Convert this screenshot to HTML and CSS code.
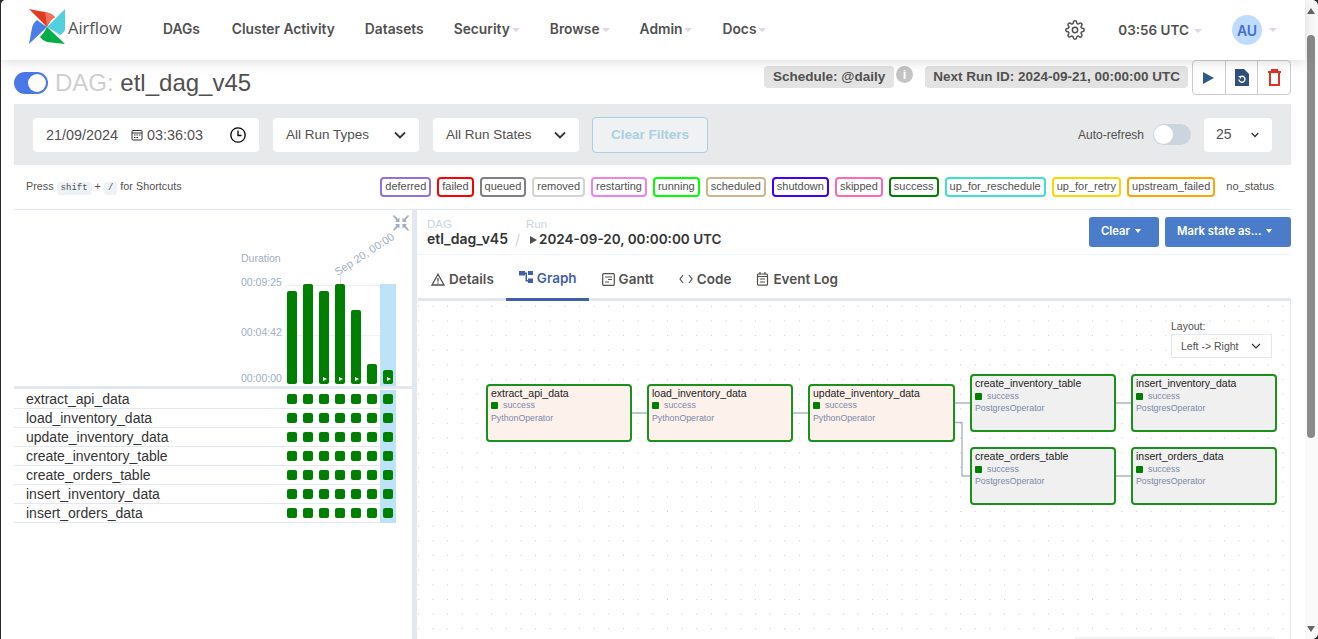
FILE: index.html
```html
<!DOCTYPE html>
<html lang="en">
<head>
  <meta charset="UTF-8">
  <title>Airflow - etl_dag_v45</title>
  <link rel="stylesheet" href="styles.css">
</head>
<body>
<div class="window">
  <div class="viewport">
    <nav class="navbar">
      <a class="brand">
        <svg class="logo" width="38" height="38" viewBox="28 8 38 38">
          <path fill="#e43921" d="M47 27L29 9Q38 11 45 12Q51 13 55 17Q50 20 47 27Z"/>
          <path fill="#f4725b" d="M47 27Q46 18 45 12Q51 13 55 17Q50 20 47 27Z"/>
          <path fill="#4fd0dc" d="M47 27L65 9V30Q63 34 60 35Q53 30 47 27Z"/>
          <path fill="#00ad46" d="M47 27L65 44L47 42Q43 41 40 37Q45 32 47 27Z"/>
          <path fill="#4a7fe8" d="M47 27L29 44L32 28Q33 23 37 20Q42 24 47 27Z"/>
          <path fill="#6fa4f0" d="M47 27L37 20Q42 24 47 27Z"/>
        </svg>
        <span class="brand-name">Airflow</span>
      </a>
      <ul class="nav-links">
        <li>DAGs</li>
        <li>Cluster Activity</li>
        <li>Datasets</li>
        <li class="drop">Security</li>
        <li class="drop">Browse</li>
        <li class="drop">Admin</li>
        <li class="drop">Docs</li>
      </ul>
      <div class="nav-right">
        <svg class="gear" width="20" height="20" viewBox="0 0 24 24" fill="none" stroke="#51504f" stroke-width="1.8" stroke-linejoin="round">
          <circle cx="12" cy="12" r="3.2"/>
          <path d="M19.4 15a1.7 1.7 0 0 0 .3 1.8l.1.1a2 2 0 1 1-2.9 2.9l-.1-.1a1.7 1.7 0 0 0-2.8 1.2v.1a2 2 0 1 1-4 0V21a1.7 1.7 0 0 0-2.9-1.2l-.1.1a2 2 0 1 1-2.8-2.9l.1-.1a1.7 1.7 0 0 0-1.2-2.8H3a2 2 0 1 1 0-4h.1a1.7 1.7 0 0 0 1.2-2.9l-.1-.1a2 2 0 1 1 2.9-2.8l.1.1a1.7 1.7 0 0 0 1.8.3H9a1.7 1.7 0 0 0 1-1.5V3a2 2 0 1 1 4 0v.1a1.7 1.7 0 0 0 2.9 1.2l.1-.1a2 2 0 1 1 2.8 2.9l-.1.1a1.7 1.7 0 0 0-.3 1.8V9a1.7 1.7 0 0 0 1.5 1H21a2 2 0 1 1 0 4h-.1a1.7 1.7 0 0 0-1.5 1z"/>
        </svg>
        <span class="clock drop">03:56 UTC</span>
        <span class="avatar">AU</span>
        <span class="caret"></span>
      </div>
    </nav>

    <div class="content">
      <header class="dag-head">
        <div class="dag-title">
          <span class="switch-on"></span>
          <h1><span class="muted">DAG:</span> etl_dag_v45</h1>
        </div>
        <div class="dag-meta">
          <span class="pill">Schedule: @daily</span>
          <span class="info">i</span>
          <span class="pill next-run">Next Run ID: 2024-09-21, 00:00:00 UTC</span>
          <div class="actions">
            <button class="action">
              <svg width="11" height="12" viewBox="0 0 11 12"><path fill="#2f5a8a" d="M0 0L11 6L0 12Z"/></svg>
            </button>
            <button class="action">
              <svg width="14" height="17" viewBox="0 0 14 17">
                <path fill="#2f4f7f" d="M0 0H9L14 5V17H0Z"/>
                <path fill="none" stroke="#fff" stroke-width="1.4" d="M4 10.5A3 3 0 1 0 5 8"/>
                <path fill="#fff" d="M3 7H6V10Z"/>
              </svg>
            </button>
            <button class="action">
              <svg width="13" height="17" viewBox="0 0 13 17" fill="none" stroke="#e03127" stroke-width="2">
                <path d="M0 3H13M4 3V1H9V3M2 4V16H11V4"/>
              </svg>
            </button>
          </div>
        </div>
      </header>

      <section class="filters">
        <div class="field date-field">
          <span>21/09/2024</span>
          <svg class="cal" width="12" height="12" viewBox="0 0 12 12" fill="none" stroke="#333" stroke-width="1">
            <rect x="1" y="1.5" width="10" height="9.5" rx="1"/>
            <path d="M1 4H11M3 6H4.5M5.5 6H7M8 6H9.5M3 8.5H4.5M5.5 8.5H7"/>
          </svg>
          <span>03:36:03</span>
          <svg class="clock-icon" width="16" height="16" viewBox="0 0 16 16" fill="none" stroke="#000" stroke-width="1.3">
            <circle cx="8" cy="8" r="7.2"/>
            <path d="M8 3.5V8.5H11.5"/>
          </svg>
        </div>
        <div class="field select-field run-select">
          <span>All Run Types</span>
          <svg class="chev" width="12" height="8" viewBox="0 0 12 8"><path d="M1 1.5L6 6.5L11 1.5" fill="none" stroke="#333" stroke-width="1.8"/></svg>
        </div>
        <div class="field select-field run-select">
          <span>All Run States</span>
          <svg class="chev" width="12" height="8" viewBox="0 0 12 8"><path d="M1 1.5L6 6.5L11 1.5" fill="none" stroke="#333" stroke-width="1.8"/></svg>
        </div>
        <button class="clear-filters">Clear Filters</button>
        <div class="refresh">
          <span class="refresh-label">Auto-refresh</span>
          <span class="switch-off"></span>
          <div class="field select-field count-select">
            <span>25</span>
            <svg width="8" height="6" viewBox="0 0 8 6"><path d="M.7 1L4 4.5L7.3 1" fill="none" stroke="#333" stroke-width="1.3"/></svg>
          </div>
        </div>
      </section>

      <section class="legend-row">
        <p class="shortcuts">Press <kbd>shift</kbd> + <kbd class="slash">/</kbd> for Shortcuts</p>
        <ul class="legend">
          <li class="st-deferred">deferred</li>
          <li class="st-failed">failed</li>
          <li class="st-queued">queued</li>
          <li class="st-removed">removed</li>
          <li class="st-restarting">restarting</li>
          <li class="st-running">running</li>
          <li class="st-scheduled">scheduled</li>
          <li class="st-shutdown">shutdown</li>
          <li class="st-skipped">skipped</li>
          <li class="st-success">success</li>
          <li class="st-reschedule">up_for_reschedule</li>
          <li class="st-retry">up_for_retry</li>
          <li class="st-upstream">upstream_failed</li>
          <li class="st-none">no_status</li>
        </ul>
      </section>

      <div class="split">
        <aside class="grid-panel">
          <div class="chart">
            <svg class="collapse" width="16" height="16" viewBox="0 0 16 16" fill="#a0aec0">
              <path d="M0 1L1 0L5 4L6.5 2.5V7H2L3.5 5.5Z"/>
              <path d="M16 1L15 0L11 4L9.5 2.5V7H14L12.5 5.5Z"/>
              <path d="M0 15L1 16L5 12L6.5 13.5V9H2L3.5 10.5Z"/>
              <path d="M16 15L15 16L11 12L9.5 13.5V9H14L12.5 10.5Z"/>
            </svg>
            <span class="duration-title">Duration</span>
            <span class="run-date">Sep 20, 00:00</span>
            <span class="run-tick"></span>
            <div class="y-axis">
              <span>00:09:25</span>
              <span>00:04:42</span>
              <span>00:00:00</span>
            </div>
            <div class="plot">
              <i class="gridline line-top"></i>
              <i class="gridline line-mid"></i>
              <i class="gridline line-low"></i>
              <div class="bar-col"><div class="bar h93"></div></div>
              <div class="bar-col"><div class="bar h100"></div></div>
              <div class="bar-col"><div class="bar h93 manual"></div></div>
              <div class="bar-col"><div class="bar h100 manual"></div></div>
              <div class="bar-col"><div class="bar h74 manual"></div></div>
              <div class="bar-col"><div class="bar h20"></div></div>
              <div class="bar-col selected"><div class="bar h14 manual"></div></div>
            </div>
          </div>
          <div class="thick-rule"></div>
          <div class="task-rows">
            <div class="task-row"><span class="task-name">extract_api_data</span><span class="cell"><b></b></span><span class="cell"><b></b></span><span class="cell"><b></b></span><span class="cell"><b></b></span><span class="cell"><b></b></span><span class="cell"><b></b></span><span class="cell selected"><b></b></span></div>
            <div class="task-row"><span class="task-name">load_inventory_data</span><span class="cell"><b></b></span><span class="cell"><b></b></span><span class="cell"><b></b></span><span class="cell"><b></b></span><span class="cell"><b></b></span><span class="cell"><b></b></span><span class="cell selected"><b></b></span></div>
            <div class="task-row"><span class="task-name">update_inventory_data</span><span class="cell"><b></b></span><span class="cell"><b></b></span><span class="cell"><b></b></span><span class="cell"><b></b></span><span class="cell"><b></b></span><span class="cell"><b></b></span><span class="cell selected"><b></b></span></div>
            <div class="task-row"><span class="task-name">create_inventory_table</span><span class="cell"><b></b></span><span class="cell"><b></b></span><span class="cell"><b></b></span><span class="cell"><b></b></span><span class="cell"><b></b></span><span class="cell"><b></b></span><span class="cell selected"><b></b></span></div>
            <div class="task-row"><span class="task-name">create_orders_table</span><span class="cell"><b></b></span><span class="cell"><b></b></span><span class="cell"><b></b></span><span class="cell"><b></b></span><span class="cell"><b></b></span><span class="cell"><b></b></span><span class="cell selected"><b></b></span></div>
            <div class="task-row"><span class="task-name">insert_inventory_data</span><span class="cell"><b></b></span><span class="cell"><b></b></span><span class="cell"><b></b></span><span class="cell"><b></b></span><span class="cell"><b></b></span><span class="cell"><b></b></span><span class="cell selected"><b></b></span></div>
            <div class="task-row"><span class="task-name">insert_orders_data</span><span class="cell"><b></b></span><span class="cell"><b></b></span><span class="cell"><b></b></span><span class="cell"><b></b></span><span class="cell"><b></b></span><span class="cell"><b></b></span><span class="cell selected"><b></b></span></div>
          </div>
        </aside>

        <main class="detail-panel">
          <div class="crumb-bar">
            <div class="crumbs">
              <div class="crumb crumb-dag">
                <small>DAG</small>
                <strong>etl_dag_v45</strong>
              </div>
              <span class="crumb-sep">/</span>
              <div class="crumb crumb-run">
                <small class="run-label">Run</small>
                <strong><span class="run-arrow"></span>2024-09-20, 00:00:00 UTC</strong>
              </div>
            </div>
            <div class="crumb-actions">
              <button class="btn-blue btn-clear">Clear<span class="btn-caret"></span></button>
              <button class="btn-blue btn-mark">Mark state as...<span class="btn-caret"></span></button>
            </div>
          </div>

          <div class="tabs">
            <a class="tab">
              <svg width="14" height="13" viewBox="0 0 14 13" fill="none" stroke="#51504f" stroke-width="1.3"><path d="M7 1.2L13 12H1Z"/><path d="M7 5V8.6M7 9.6V10.8"/></svg>
              Details
            </a>
            <a class="tab active">
              <svg width="14" height="13" viewBox="0 0 14 13" fill="#3f5fa8"><rect x="0" y="0" width="6" height="4.500"/><rect x="9" y="0" width="5" height="4"/><rect x="9" y="7.500" width="5" height="4.500"/><path d="M6 1.500H8V9H9V10.500H6.500V3H6Z"/></svg>
              Graph
            </a>
            <a class="tab">
              <svg width="13" height="13" viewBox="0 0 13 13" fill="none" stroke="#51504f" stroke-width="1.2"><rect x=".7" y=".7" width="11.6" height="11.6" rx="1"/><path d="M3 4H10M6 6.5H10M3 9H7"/></svg>
              Gantt
            </a>
            <a class="tab">
              <svg width="14" height="10" viewBox="0 0 14 10" fill="none" stroke="#51504f" stroke-width="1.2"><path d="M4 1L1 5L4 9M10 1L13 5L10 9"/></svg>
              Code
            </a>
            <a class="tab">
              <svg width="13" height="14" viewBox="0 0 13 14" fill="none" stroke="#51504f" stroke-width="1.2"><rect x="1.5" y="2" width="10" height="11.2" rx="1"/><path d="M1.5 4.5H11.5M4 0V2.5M9 0V2.5M4 7H9M4 10H9"/></svg>
              Event Log
            </a>
          </div>

          <div class="graph">
            <svg class="edges" width="872" height="338" viewBox="418 301 872 338" fill="none" stroke="#a9b5c6" stroke-width="1.4">
              <path d="M632 413H647M793 413H808M955 403H970M955 422.500H962V476H970M1116 403H1131M1116 476H1131"/>
            </svg>

            <div class="layout-picker">
              <label>Layout:</label>
              <div class="layout-select">
                <span>Left -&gt; Right</span>
                <svg width="10" height="6" viewBox="0 0 10 6"><path d="M1 1L5 5L9 1" fill="none" stroke="#333" stroke-width="1.2"/></svg>
              </div>
            </div>

            <div class="node py node-a">
              <div class="node-name">extract_api_data</div>
              <div class="node-state"><b></b>success</div>
              <div class="node-op">PythonOperator</div>
            </div>
            <div class="node py node-b">
              <div class="node-name">load_inventory_data</div>
              <div class="node-state"><b></b>success</div>
              <div class="node-op">PythonOperator</div>
            </div>
            <div class="node py node-c">
              <div class="node-name">update_inventory_data</div>
              <div class="node-state"><b></b>success</div>
              <div class="node-op">PythonOperator</div>
            </div>
            <div class="node pg node-d">
              <div class="node-name">create_inventory_table</div>
              <div class="node-state"><b></b>success</div>
              <div class="node-op">PostgresOperator</div>
            </div>
            <div class="node pg node-e">
              <div class="node-name">insert_inventory_data</div>
              <div class="node-state"><b></b>success</div>
              <div class="node-op">PostgresOperator</div>
            </div>
            <div class="node pg node-f">
              <div class="node-name">create_orders_table</div>
              <div class="node-state"><b></b>success</div>
              <div class="node-op">PostgresOperator</div>
            </div>
            <div class="node pg node-g">
              <div class="node-name">insert_orders_data</div>
              <div class="node-state"><b></b>success</div>
              <div class="node-op">PostgresOperator</div>
            </div>
            <div class="graph-foot"></div>
          </div>
        </main>
      </div>
    </div>
  </div>

  <div class="scrollbar">
    <span class="scroll-up"></span>
    <span class="scroll-thumb"></span>
    <span class="scroll-down"></span>
  </div>
</div>
</body>
</html>
```

FILE: styles.css
```css
* {
  box-sizing: border-box;
}

html {
  background-color: #2b2b2b;
}

body {
  margin: 0;
  height: 639px;
  overflow: hidden;
  font-family: "Liberation Sans", Arial, sans-serif;
  color: #51504f;
}

button {
  font-family: inherit;
}

.window {
  display: flex;
  height: 639px;
  margin-left: 1px;
  background-color: #fff;
  border-radius: 5px 6px 6px 0;
  overflow: hidden;
}

.viewport {
  flex: 1;
  min-width: 0;
}

/* navbar */
.navbar {
  display: flex;
  align-items: center;
  height: 60px;
  padding-left: 27px;
  background-color: #fff;
  box-shadow: 0 2px 12px rgba(0, 0, 0, 0.14);
  position: relative;
  z-index: 2;
}

.brand {
  display: flex;
  align-items: flex-start;
  width: 135px;
  height: 38px;
  margin-top: -7px;
}

.brand-name {
  margin: 8px 0 0 2px;
  font-family: "Open Sans", sans-serif;
  font-size: 16.500px;
  color: #51504f;
}

.nav-links {
  display: flex;
  gap: 30px;
  margin: 0 0 2px;
  padding: 0;
  list-style: none;
  font-family: Inter, sans-serif;
  font-size: 13.800px;
  font-weight: 600;
}

.nav-links li:first-child {
  margin-right: 2px;
}

.drop::after {
  content: "";
  display: inline-block;
  margin-left: 2px;
  vertical-align: 2px;
  border-top: 4px solid #e3d5e6;
  border-left: 4px solid transparent;
  border-right: 4px solid transparent;
}

.nav-right {
  display: flex;
  align-items: center;
  margin-left: auto;
  margin-right: 28px;
  font-family: Inter, sans-serif;
  font-size: 13.500px;
  font-weight: 600;
}

.gear {
  margin-right: 33px;
}

.clock::after {
  margin-left: 5px;
}

.avatar {
  display: flex;
  align-items: center;
  justify-content: center;
  width: 30px;
  height: 30px;
  margin-left: 30px;
  border-radius: 50%;
  background-color: #bfdbfe;
  color: #3f6fdc;
  font-size: 14px;
}

.caret {
  margin-left: 7px;
  border-top: 4px solid #e3d5e6;
  border-left: 4px solid transparent;
  border-right: 4px solid transparent;
}

/* dag header */
.content {
  padding: 0 14px 0 13px;
}

.dag-head {
  display: flex;
  justify-content: space-between;
  height: 44px;
}

.dag-title {
  display: flex;
  align-items: center;
  gap: 7px;
  padding-top: 1px;
}

.dag-title h1 {
  margin: 0;
  font-size: 24px;
  font-weight: 400;
  color: #51504f;
}

.muted {
  color: #cfcfcf;
}

.switch-on {
  position: relative;
  width: 34px;
  height: 22px;
  border-radius: 11px;
  background-color: #4a78e8;
}

.switch-on::after {
  content: "";
  position: absolute;
  right: 2px;
  top: 2px;
  width: 18px;
  height: 18px;
  border-radius: 50%;
  background-color: #fff;
}

.dag-meta {
  display: flex;
  align-items: flex-start;
}

.pill {
  margin-top: 6px;
  height: 22px;
  line-height: 22px;
  padding: 0 9px;
  border-radius: 4px;
  background-color: #e3e3e3;
  font-size: 13.500px;
  font-weight: 700;
}

.info {
  width: 17px;
  height: 17px;
  margin: 6px 12px 0 2px;
  border-radius: 50%;
  background-color: #c4c4c4;
  color: #fff;
  text-align: center;
  font-size: 13px;
  font-weight: 700;
  line-height: 17px;
}

.next-run {
  margin-right: 4px;
  padding: 0 8px;
}

.actions {
  display: flex;
  width: 99px;
  height: 35px;
  border: 1px solid #ccc;
  border-radius: 4px;
  background-color: #fff;
}

.action {
  display: flex;
  flex: 1;
  align-items: center;
  justify-content: center;
  padding: 0;
  border: 0;
  border-right: 1px solid #ccc;
  background: none;
}

.action:last-child {
  border-right: 0;
}

/* filter bar */
.filters {
  display: flex;
  align-items: center;
  height: 61px;
  padding: 0 19px;
  background-color: #e8e9ea;
}

.field {
  display: flex;
  align-items: center;
  height: 34px;
  background-color: #fff;
  border-radius: 4px;
  font-size: 14px;
  color: #51504f;
}

.date-field {
  width: 226px;
  padding: 0 13px;
  margin-right: 14px;
  font-size: 14.400px;
}

.cal {
  margin: 0 4px 0 13px;
}

.clock-icon {
  margin-left: auto;
}

.select-field {
  justify-content: space-between;
  padding: 0 13px;
  font-size: 13.500px;
}

.select-field span {
  margin-bottom: 1px;
}

.run-select {
  width: 146px;
  margin-right: 14px;
}

.clear-filters {
  width: 116px;
  height: 36px;
  margin-left: -1px;
  padding-bottom: 2px;
  border: 1px solid #a8d0e0;
  border-radius: 4px;
  background-color: #f0f1f2;
  color: #a8d0e0;
  font-size: 13.500px;
  font-weight: 700;
}

.refresh {
  display: flex;
  align-items: center;
  margin-left: auto;
}

.refresh-label {
  font-size: 12px;
}

.switch-off {
  position: relative;
  width: 38px;
  height: 21px;
  margin: 0 13px 0 9px;
  border-radius: 11px;
  background-color: #cbd5e0;
}

.switch-off::after {
  content: "";
  position: absolute;
  left: 1px;
  top: 1px;
  width: 19px;
  height: 19px;
  border-radius: 50%;
  background-color: #fff;
}

.count-select {
  width: 68px;
  padding: 0 13px 0 12px;
  font-size: 14px;
}

/* legend */
.legend-row {
  display: flex;
  align-items: center;
  justify-content: space-between;
  height: 45px;
  padding: 0 12px;
  border-bottom: 1px solid #e2e8f0;
  font-size: 11px;
}

.shortcuts {
  margin: 0;
  font-size: 10.800px;
}

.shortcuts kbd {
  display: inline-block;
  padding: 0 4px;
  background-color: #edf2f7;
  border-radius: 3px;
  font-family: "Liberation Mono", monospace;
  font-size: 9px;
  line-height: 13px;
}

.legend {
  display: flex;
  gap: 6px;
  margin: 0;
  padding: 0;
  list-style: none;
}

.legend li {
  height: 20px;
  padding: 0 3px;
  border: 2px solid transparent;
  border-radius: 4px;
  line-height: 15px;
}

.st-deferred { border-color: #9370db !important; }
.st-failed { border-color: #ff0000 !important; }
.st-queued { border-color: #808080 !important; }
.st-removed { border-color: #d3d3d3 !important; }
.st-restarting { border-color: #ee82ee !important; }
.st-running { border-color: #00ff00 !important; }
.st-scheduled { border-color: #d2b48c !important; }
.st-shutdown { border-color: #3f00ff !important; }
.st-skipped { border-color: #ff69b4 !important; }
.st-success { border-color: #008000 !important; }
.st-reschedule { border-color: #40e0d0 !important; }
.st-retry { border-color: #ffd700 !important; }
.st-upstream { border-color: #ffa500 !important; }

/* split */
.split {
  display: flex;
  height: 430px;
}

.grid-panel {
  width: 403px;
  flex-shrink: 0;
  border-right: 5px solid #e2e8f0;
  margin-right: 1px;
}

.chart {
  position: relative;
  display: flex;
  justify-content: flex-end;
  height: 176px;
  padding-top: 74px;
  padding-right: 16px;
}

.collapse {
  position: absolute;
  top: 5px;
  right: 3px;
}

.duration-title {
  position: absolute;
  left: 227px;
  top: 42px;
  font-size: 10.5px;
  color: #a0aec0;
}

.run-date {
  position: absolute;
  left: 316px;
  top: 38px;
  font-size: 11px;
  color: #a0aec0;
  white-space: nowrap;
  transform: rotate(-33deg);
}

.run-tick {
  position: absolute;
  left: 326px;
  top: 64px;
  width: 1px;
  height: 10px;
  background-color: #e2e8f0;
}

.y-axis {
  position: absolute;
  left: 227px;
  top: 66px;
  display: flex;
  flex-direction: column;
  font-size: 10.5px;
  line-height: 12px;
  color: #a0aec0;
}

.y-axis span + span {
  margin-top: 38px;
}

.y-axis span:last-child {
  margin-top: 34px;
}

.plot {
  position: relative;
  display: flex;
  align-items: stretch;
  height: 102px;
}

.gridline {
  position: absolute;
  left: 1px;
  width: 96px;
  height: 1px;
  background-color: #edf2f7;
}

.line-top { top: 1px; }
.line-mid { top: 51px; }
.line-low { top: 97px; }

.bar-col {
  position: relative;
  display: flex;
  align-items: flex-end;
  justify-content: center;
  width: 16px;
  padding-bottom: 2px;
}

.bar-col.selected {
  background-color: #bee3f8;
}

.bar {
  position: relative;
  width: 10px;
  background-color: #008000;
  border-radius: 2px;
}

.h100 { height: 100px; }
.h93 { height: 93px; }
.h74 { height: 74px; }
.h20 { height: 20px; }
.h14 { height: 14px; }

.bar.manual::after {
  content: "";
  position: absolute;
  left: 4px;
  bottom: 3px;
  border-left: 4px solid #fff;
  border-top: 2.500px solid transparent;
  border-bottom: 2.500px solid transparent;
}

.thick-rule {
  height: 3px;
  background-color: #e2e8f0;
  margin: 0 -1px 1px 0;
}

.task-row {
  display: flex;
  width: 382px;
  height: 19px;
}

.task-name {
  flex: 1;
  padding-left: 12px;
  border-bottom: 1px solid #e2e8f0;
  font-size: 14px;
  line-height: 18px;
  color: #333;
}

.cell {
  display: flex;
  justify-content: center;
  width: 16px;
  padding-top: 4px;
  border-bottom: 1px solid #e2e8f0;
}

.cell.selected {
  background-color: #bee3f8;
  border-bottom-color: #bee3f8;
}

.cell b {
  width: 10px;
  height: 10px;
  background-color: #008000;
  border-radius: 2px;
}

/* detail panel */
.detail-panel {
  flex: 1;
  min-width: 0;
}

.crumb-bar {
  display: flex;
  justify-content: space-between;
  height: 45px;
  padding: 7px 0 0 9px;
  border-bottom: 1px solid #edf2f7;
}

.crumbs {
  display: flex;
  padding-top: 1px;
  font-family: Inter, sans-serif;
}

.crumb {
  display: flex;
  flex-direction: column;
}

.crumb small {
  font-family: "Liberation Sans", Arial, sans-serif;
  font-size: 11.500px;
  line-height: 12px;
  color: #cbd5e0;
}

.crumb strong {
  margin-top: 2px;
  font-size: 14px;
  line-height: 14px;
  font-weight: 600;
  color: #333;
}

.crumb-run strong {
  font-size: 13.500px;
}

.crumb-sep {
  margin: 13px 5px 0 7px;
  color: #cbd5e0;
  font-size: 14px;
}

.run-label {
  padding-left: 1px;
}

.run-arrow {
  display: inline-block;
  margin: 0 2px 0 5px;
  border-left: 7px solid #51504f;
  border-top: 4px solid transparent;
  border-bottom: 4px solid transparent;
}

.crumb-actions {
  display: flex;
  gap: 6px;
}

.btn-blue {
  height: 30px;
  padding: 0 0 2px 12px;
  border: 0;
  border-radius: 3px;
  background-color: #4a7cc9;
  color: #fff;
  font-family: Inter, sans-serif;
  font-size: 11.300px;
  font-weight: 600;
  text-align: left;
}

.btn-clear {
  width: 70px;
}

.btn-mark {
  width: 126px;
}

.btn-caret {
  display: inline-block;
  margin-left: 5px;
  vertical-align: 2px;
  border-top: 4px solid #fff;
  border-left: 3.500px solid transparent;
  border-right: 3.500px solid transparent;
}

.tabs {
  display: flex;
  height: 46px;
  padding-top: 0;
  border-bottom: 3px solid #e2e8f0;
  font-family: Inter, sans-serif;
  font-size: 13.500px;
  font-weight: 600;
}

.tab {
  display: flex;
  align-items: center;
  gap: 4px;
  height: 46px;
  padding: 2px 12px 0 13px;
  color: #51504f;
}

.tab.active {
  color: #3f5fa8;
  border-bottom: 3px solid #3f5fa8;
}

.graph {
  position: relative;
  height: 338px;
  border-right: 1px solid #e2e8f0;
  background-image: radial-gradient(circle, #c9c9c9 0.6px, transparent 0.8px);
  background-size: 14.67px 14.67px;
  background-position: -7px -2px;
  overflow: hidden;
}

.edges {
  position: absolute;
  left: 0;
  top: 0;
}

.graph-foot {
  position: absolute;
  left: 657px;
  bottom: 0;
  width: 200px;
  height: 2px;
  background-color: #f3f3f3;
}

.layout-picker {
  position: absolute;
  left: 753px;
  top: 19px;
  width: 101px;
}

.layout-picker label {
  display: block;
  font-size: 10.5px;
  line-height: 12px;
  margin-bottom: 2px;
}

.layout-select {
  display: flex;
  align-items: center;
  justify-content: space-between;
  height: 24px;
  padding: 0 10px 0 9px;
  background-color: #fff;
  border: 1px solid #e2e8f0;
  font-size: 10.500px;
}

.node {
  position: absolute;
  width: 146px;
  height: 58px;
  padding: 1px 3px;
  border: 2px solid #1c8f1c;
  border-radius: 4px;
}

.node.py {
  background-color: #fdf1eb;
}

.node.pg {
  background-color: #f0f0f0;
}

.node-a { left: 68px; top: 83px; }
.node-b { left: 229px; top: 83px; }
.node-c { left: 390px; top: 83px; width: 147px; }
.node-d { left: 552px; top: 73px; }
.node-e { left: 713px; top: 73px; }
.node-f { left: 552px; top: 146px; }
.node-g { left: 713px; top: 146px; }

.node-name {
  font-size: 10.500px;
  line-height: 12px;
  color: #222;
}

.node-state {
  display: flex;
  align-items: center;
  gap: 5px;
  margin-top: 0;
  font-size: 8.800px;
  line-height: 12px;
  color: #7b88a8;
}

.pg .node-state {
  margin-top: 1px;
}

.node-state b {
  width: 7px;
  height: 7px;
  background-color: #008000;
  border-radius: 1px;
}

.node-op {
  margin-top: 1px;
  font-size: 8.800px;
  line-height: 12px;
  color: #7b88a8;
}

.pg .node-op {
  margin-top: 0;
}

/* scrollbar */
.scrollbar {
  position: relative;
  display: flex;
  flex-direction: column;
  width: 13px;
  padding-left: 2px;
  flex-shrink: 0;
  background-color: #fafafa;
}

.scroll-up {
  width: 0;
  margin: 8px 0 0;
  border-bottom: 6px solid #666;
  border-left: 4px solid transparent;
  border-right: 4px solid transparent;
}

.scroll-thumb {
  width: 8px;
  height: 403px;
  margin-top: 21px;
  border-radius: 4px;
  background-color: #8a8a8a;
}

.scroll-down {
  width: 0;
  margin: auto 0 7px;
  border-top: 6px solid #666;
  border-left: 4px solid transparent;
  border-right: 4px solid transparent;
}
```
